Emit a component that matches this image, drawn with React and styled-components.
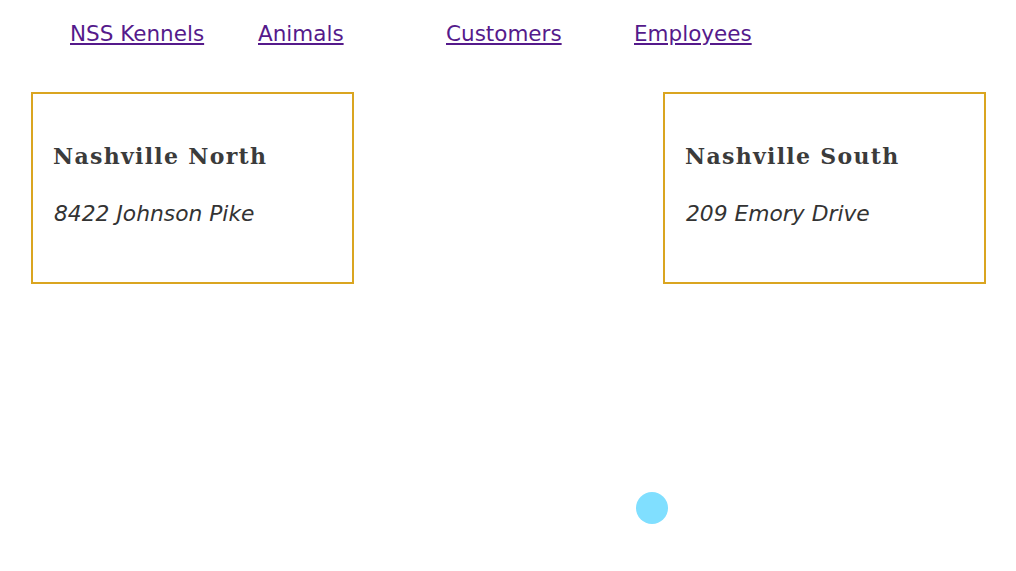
import styled, { createGlobalStyle } from "styled-components";

const GlobalStyle = createGlobalStyle`
  body {
    margin: 0;
    background: #fff;
    font-family: "DejaVu Sans", "Noto Sans", sans-serif;
  }
`;

const locations = [
  { id: 1, name: "Nashville North", address: "8422 Johnson Pike" },
  { id: 2, name: "Nashville South", address: "209 Emory Drive" },
];

const links = ["NSS Kennels", "Animals", "Customers", "Employees"];

export default function App() {
  return (
    <Page>
      <GlobalStyle />
      <NavBar>
        {links.map((label) => (
          <NavItem key={label}>
            <NavLink href="#">{label}</NavLink>
          </NavItem>
        ))}
      </NavBar>

      <Locations>
        {locations.map((loc) => (
          <Card key={loc.id}>
            <CardTitle>{loc.name}</CardTitle>
            <Address>{loc.address}</Address>
          </Card>
        ))}
      </Locations>

      <Dot />
    </Page>
  );
}

const Page = styled.div`
  position: relative;
  width: 1016px;
  height: 571px;
  overflow: hidden;
`;

const NavBar = styled.ul`
  display: flex;
  list-style: none;
  margin: 0;
  padding: 20px 0 0 70px;
`;

const NavItem = styled.li`
  width: 188px;
`;

const NavLink = styled.a`
  color: #551a8b;
  font-size: 21.5px;
  line-height: 28px;
`;

const Locations = styled.div`
  display: flex;
  justify-content: space-between;
  padding: 0 30px 0 31px;
  margin-top: 44px;
`;

const Card = styled.section`
  box-sizing: border-box;
  width: 323px;
  height: 192px;
  border: 2px solid #daa520;
  padding: 49px 20px 0 20px;
`;

const CardTitle = styled.h3`
  margin: 0;
  font-family: "DejaVu Serif", serif;
  font-weight: bold;
  font-size: 22px;
  letter-spacing: 1.3px;
  color: #3b3b3b;
`;

const Address = styled.p`
  margin: 32px 0 0 1px;
  font-style: italic;
  font-size: 21.8px;
  color: #333;
`;

const Dot = styled.div`
  position: absolute;
  left: 636px;
  top: 492px;
  width: 32px;
  height: 32px;
  border-radius: 50%;
  background: #80dfff;
`;
